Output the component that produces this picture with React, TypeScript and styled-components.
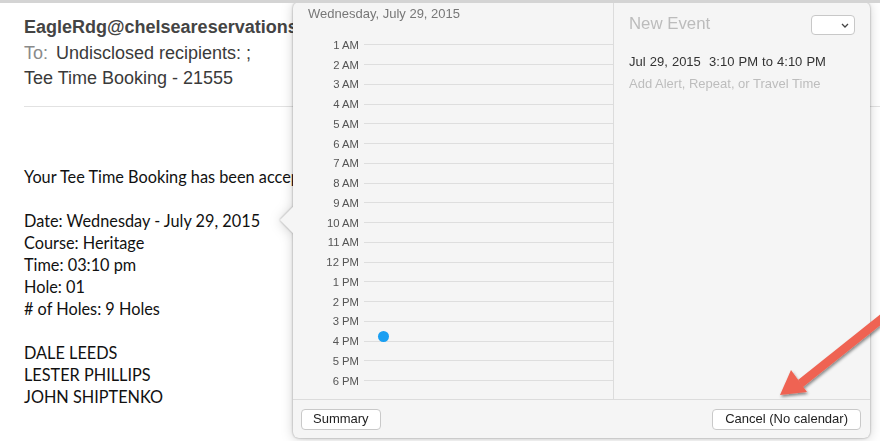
import React from 'react';
import styled, { createGlobalStyle } from 'styled-components';

const GlobalStyle = createGlobalStyle`
  html, body {
    margin: 0;
    padding: 0;
    background: #ffffff;
  }
`;

const HOURS = [
  '1 AM', '2 AM', '3 AM', '4 AM', '5 AM', '6 AM', '7 AM', '8 AM', '9 AM',
  '10 AM', '11 AM', '12 PM', '1 PM', '2 PM', '3 PM', '4 PM', '5 PM', '6 PM',
];

const BODY_LINES = [
  'Date: Wednesday - July 29, 2015',
  'Course: Heritage',
  'Time: 03:10 pm',
  'Hole: 01',
  '# of Holes: 9 Holes',
];

const PLAYERS = ['DALE LEEDS', 'LESTER PHILLIPS', 'JOHN SHIPTENKO'];

const Page = styled.div`
  position: relative;
  width: 880px;
  height: 441px;
  overflow: hidden;
  background: #ffffff;
  border-top: 3px solid #d4d4d4;
  box-sizing: border-box;
`;

const Mail = styled.div`
  padding: 14px 0 0 24px;
  display: flex;
  flex-direction: column;
`;

const MailHeader = styled.div`
  display: flex;
  flex-direction: column;
  gap: 4.5px;
  padding-bottom: 17px;
  border-bottom: 1px solid #e2e2e2;
  font-family: 'Liberation Sans', Arial, sans-serif;
  font-size: 18px;
  line-height: 21px;
  color: #3a3a3a;
  white-space: nowrap;
`;

const Sender = styled.div`
  font-weight: bold;
  font-size: 18px;
  color: #444;
`;

const Recipients = styled.div`
  display: flex;
  gap: 8px;
  span:first-child {
    color: #8a8a8a;
  }
`;

const MailBody = styled.div`
  padding-top: 59px;
  font-family: Lato, 'Liberation Sans', sans-serif;
  font-size: 16.3px;
  line-height: 22px;
  color: #111;
  white-space: nowrap;
`;

const Para = styled.div`
  margin-bottom: 22px;
`;

const Popover = styled.div`
  position: absolute;
  left: 293px;
  top: -1px;
  width: 577px;
  height: 436px;
  filter: drop-shadow(0 0 1px rgba(0, 0, 0, 0.35)) drop-shadow(0 1px 6px rgba(0, 0, 0, 0.18));
`;

const Nub = styled.div`
  position: absolute;
  left: -9px;
  top: 208px;
  width: 20px;
  height: 20px;
  background: #f5f5f5;
  transform: rotate(45deg);
`;

const Panel = styled.div`
  position: relative;
  height: 100%;
  display: flex;
  flex-direction: column;
  background: #f5f5f5;
  border-radius: 6px;
  overflow: hidden;
  font-family: 'Liberation Sans', Arial, sans-serif;
`;

const Main = styled.div`
  flex: 1;
  display: flex;
  border-bottom: 1px solid #dcdcdc;
`;

const DayColumn = styled.div`
  width: 320px;
  border-right: 1px solid #dcdcdc;
  display: flex;
  flex-direction: column;
`;

const DayTitle = styled.div`
  padding: 4px 0 0 15px;
  height: 22px;
  font-size: 13px;
  color: #777;
`;

const Timeline = styled.div`
  position: relative;
  padding-top: 7px;
`;

const HourRow = styled.div`
  display: grid;
  grid-template-columns: 66px 1fr;
  column-gap: 5px;
  align-items: center;
  height: 19.76px;
`;

const HourLabel = styled.span`
  text-align: right;
  font-size: 11.3px;
  color: #555;
`;

const HourLine = styled.span`
  height: 1px;
  background: #dedede;
`;

const EventDot = styled.span`
  position: absolute;
  left: 85px;
  top: 303px;
  width: 11px;
  height: 11px;
  border-radius: 50%;
  background: #1a9ff2;
`;

const Details = styled.div`
  flex: 1;
  padding: 11px 15px 0 15px;
  display: flex;
  flex-direction: column;
`;

const DetailsHead = styled.div`
  display: flex;
  justify-content: space-between;
  align-items: center;
  height: 24px;
  margin-top: -1px;
`;

const EventTitle = styled.span`
  font-size: 16.8px;
  color: #bcbcbc;
`;

const CalendarSelect = styled.div`
  width: 44px;
  height: 20px;
  margin-top: 2px;
  background: #fff;
  border: 1px solid #c8c8c8;
  border-radius: 4px;
  display: flex;
  align-items: center;
  justify-content: flex-end;
  padding-right: 5px;
  box-sizing: border-box;
`;

const When = styled.div`
  margin-top: 18px;
  font-size: 13px;
  color: #333;
  word-spacing: 0.5px;
`;

const Extras = styled.div`
  margin-top: 7px;
  font-size: 13px;
  color: #bdbdbd;
`;

const Footer = styled.div`
  height: 38px;
  display: flex;
  justify-content: space-between;
  align-items: center;
  padding: 0 9px 0 8px;
`;

const Button = styled.button`
  height: 21px;
  padding: 0 11px;
  background: #fff;
  border: 1px solid #c9c9c9;
  border-radius: 4px;
  font-family: 'Liberation Sans', Arial, sans-serif;
  font-size: 13px;
  color: #222;
  line-height: 18px;
`;

const CancelButton = styled(Button)`
  padding: 0 12px;
`;

const Annotation = styled.svg`
  position: absolute;
  left: 760px;
  top: 290px;
  overflow: visible;
`;

export default function App() {
  return (
    <>
      <GlobalStyle />
      <Page>
        <Mail>
          <MailHeader>
            <Sender>EagleRdg@chelseareservations.com</Sender>
            <Recipients>
              <span>To:</span>
              <span>Undisclosed recipients: ;</span>
            </Recipients>
            <div>Tee Time Booking - 21555</div>
          </MailHeader>
          <MailBody>
            <Para>Your Tee Time Booking has been accepted.</Para>
            <Para>
              {BODY_LINES.map((l) => (
                <div key={l}>{l}</div>
              ))}
            </Para>
            <div>
              {PLAYERS.map((p) => (
                <div key={p}>{p}</div>
              ))}
            </div>
          </MailBody>
        </Mail>

        <Popover>
          <Nub />
          <Panel>
            <Main>
              <DayColumn>
                <DayTitle>Wednesday, July 29, 2015</DayTitle>
                <Timeline>
                  {HOURS.map((h) => (
                    <HourRow key={h}>
                      <HourLabel>{h}</HourLabel>
                      <HourLine />
                    </HourRow>
                  ))}
                  <EventDot />
                </Timeline>
              </DayColumn>
              <Details>
                <DetailsHead>
                  <EventTitle>New Event</EventTitle>
                  <CalendarSelect>
                    <svg width="8" height="5" viewBox="0 0 8 5">
                      <path d="M1 1l3 3 3-3" fill="none" stroke="#444" strokeWidth="1.3" />
                    </svg>
                  </CalendarSelect>
                </DetailsHead>
                <When>Jul 29, 2015&nbsp; 3:10 PM to 4:10 PM</When>
                <Extras>Add Alert, Repeat, or Travel Time</Extras>
              </Details>
            </Main>
            <Footer>
              <Button>Summary</Button>
              <CancelButton>Cancel (No calendar)</CancelButton>
            </Footer>
          </Panel>
        </Popover>

        <Annotation width="120" height="110" viewBox="0 0 120 110">
          <defs>
            <filter id="arrowShadow" x="-20%" y="-20%" width="140%" height="140%">
              <feDropShadow dx="1" dy="2" stdDeviation="1.5" floodColor="#000" floodOpacity="0.45" />
            </filter>
          </defs>
          <g filter="url(#arrowShadow)" fill="#ef6352">
            <path d="M122 20 L127 27 L43 94 L38 87 Z" />
            <path d="M20 102 L31 77 L47 99 Z" />
          </g>
        </Annotation>
      </Page>
    </>
  );
}
